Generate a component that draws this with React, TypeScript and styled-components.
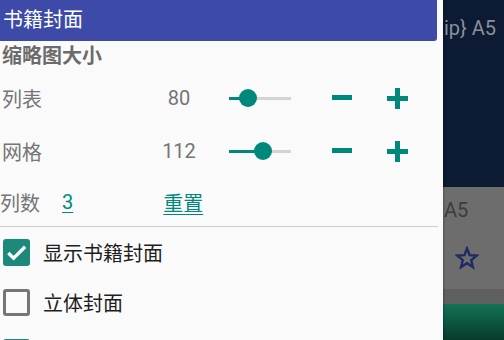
import styled, { createGlobalStyle } from "styled-components";

const teal = "#00897b";

const GlobalStyle = createGlobalStyle`
  html, body {
    margin: 0;
    padding: 0;
    background: #0c1a33;
  }
  body {
    font-family: Roboto, "Noto Sans CJK SC", sans-serif;
  }
`;

const Screen = styled.div`
  width: 504px;
  height: 340px;
  display: flex;
  overflow: hidden;
`;

const Panel = styled.div`
  width: 443px;
  flex: none;
  background: #fafafa;
  display: flex;
  flex-direction: column;
  box-shadow: 1px 0 2px rgba(0, 0, 0, 0.25);
  z-index: 1;
  & > * {
    flex: none;
  }
`;

const Header = styled.div`
  width: 437px;
  height: 41px;
  background: #3d4aa8;
  border-bottom-right-radius: 3px;
  color: #fff;
  font-size: 20px;
  line-height: 41px;
  padding-left: 3px;
  box-sizing: border-box;
`;

const SubTitle = styled.div`
  height: 31px;
  line-height: 31px;
  padding-left: 2px;
  font-size: 20px;
  font-weight: bold;
  color: #6b6b6b;
`;

const Row = styled.div<{ h: number }>`
  height: ${(p) => p.h}px;
  display: flex;
  align-items: center;
  font-size: 20px;
  color: #757575;
`;

const Label = styled.span<{ w: number; pad?: number }>`
  width: ${(p) => p.w}px;
  padding-left: ${(p) => p.pad ?? 2}px;
  box-sizing: border-box;
  flex: none;
`;

const Value = styled.span`
  width: 60px;
  text-align: center;
  flex: none;
  color: #757575;
`;

const Track = styled.div`
  position: relative;
  width: 62px;
  height: 3px;
  margin-left: 20px;
  background: #d4d4d4;
  flex: none;
`;

const Fill = styled.div`
  position: absolute;
  left: 0;
  top: 0;
  bottom: 0;
  background: ${teal};
`;

const Thumb = styled.div`
  position: absolute;
  top: 50%;
  width: 18px;
  height: 18px;
  margin: -9px 0 0 -9px;
  border-radius: 50%;
  background: ${teal};
`;

const IconButton = styled.button<{ ml: number }>`
  width: 40px;
  height: 40px;
  margin-left: ${(p) => p.ml}px;
  padding: 0;
  border: none;
  background: none;
  display: flex;
  align-items: center;
  justify-content: center;
  flex: none;
`;

const Link = styled.span<{ ml: number }>`
  margin-left: ${(p) => p.ml}px;
  color: ${teal};
  text-decoration: underline;
  text-underline-offset: 3px;
  text-decoration-thickness: 1px;
`;

const Divider = styled.div`
  height: 1px;
  width: 438px;
  background: #cfcfcf;
`;

const CheckRow = styled.div`
  height: 50px;
  display: flex;
  align-items: center;
  font-size: 20px;
  color: #1e1e1e;
`;

const Box = styled.div<{ on: boolean }>`
  width: 27px;
  height: 27px;
  margin-left: 3px;
  margin-right: 13px;
  box-sizing: border-box;
  border-radius: 3px;
  flex: none;
  display: flex;
  align-items: center;
  justify-content: center;
  background: ${(p) => (p.on ? "#1b8a7b" : "transparent")};
  border: ${(p) => (p.on ? "none" : "3px solid #757575")};
`;

const Side = styled.div`
  flex: 1;
  display: flex;
  flex-direction: column;
  overflow: hidden;
`;

const Block = styled.div<{ h: number; bg: string; fg?: string }>`
  height: ${(p) => p.h}px;
  flex: none;
  background: ${(p) => p.bg};
  color: ${(p) => p.fg ?? "#888"};
  font-size: 20px;
  white-space: nowrap;
  display: flex;
  flex-direction: column;
`;

const SideText = styled.div<{ mt: number; ml: number }>`
  margin-top: ${(p) => p.mt}px;
  margin-left: ${(p) => p.ml}px;
  line-height: 24px;
`;

const StarWrap = styled.div`
  margin: 24px 0 0 12px;
`;

const Slider = ({ pos }: { pos: number }) => (
  <Track>
    <Fill style={{ width: pos }} />
    <Thumb style={{ left: pos }} />
  </Track>
);

const Minus = () => (
  <svg width="20" height="6" viewBox="0 0 20 6">
    <rect x="0" y="0" width="20" height="5" fill={teal} />
  </svg>
);

const Plus = () => (
  <svg width="21" height="21" viewBox="0 0 21 21">
    <rect x="0" y="8" width="21" height="5" fill={teal} />
    <rect x="8" y="0" width="5" height="21" fill={teal} />
  </svg>
);

const Check = () => (
  <svg width="23" height="23" viewBox="0 0 24 24">
    <path d="M3.5 12.5l5.5 5.5L21 6" fill="none" stroke="#fff" strokeWidth="3.4" />
  </svg>
);

const Star = () => (
  <svg width="24" height="24" viewBox="0 0 24 24">
    <path
      d="M12 2.5l2.6 6.6 7 .5-5.4 4.5 1.7 6.9L12 17.2 6.1 21l1.7-6.9L2.4 9.6l7-.5z"
      fill="none"
      stroke="#1f2a66"
      strokeWidth="2.4"
      strokeLinejoin="miter"
    />
  </svg>
);

export default function App() {
  return (
    <>
      <GlobalStyle />
      <Screen>
        <Panel>
          <Header>书籍封面</Header>
          <SubTitle>缩略图大小</SubTitle>
          <Row h={52}>
            <Label w={149}>列表</Label>
            <Value>80</Value>
            <Slider pos={19} />
            <IconButton ml={31}>
              <Minus />
            </IconButton>
            <IconButton ml={15}>
              <Plus />
            </IconButton>
          </Row>
          <Row h={54}>
            <Label w={149}>网格</Label>
            <Value>112</Value>
            <Slider pos={34} />
            <IconButton ml={31}>
              <Minus />
            </IconButton>
            <IconButton ml={15}>
              <Plus />
            </IconButton>
          </Row>
          <Row h={48}>
            <Label w={41} pad={0}>列数</Label>
            <Link ml={21}>3</Link>
            <Link ml={90}>重置</Link>
          </Row>
          <Divider />
          <CheckRow>
            <Box on>
              <Check />
            </Box>
            显示书籍封面
          </CheckRow>
          <CheckRow>
            <Box on={false} />
            立体封面
          </CheckRow>
          <CheckRow>
            <Box on>
              <Check />
            </Box>
          </CheckRow>
        </Panel>
        <Side>
          <Block h={187} bg="#0c1a33" fg="#8a8f9a">
            <SideText mt={16} ml={1}>{"ip} A5"}</SideText>
          </Block>
          <Block h={102} bg="#6d6d6d" fg="#3c3c3c">
            <SideText mt={11} ml={1}>A5</SideText>
            <StarWrap>
              <Star />
            </StarWrap>
          </Block>
          <Block h={15} bg="#5f5f5f" />
          <Block h={36} bg="linear-gradient(#147257, #073a2c)" />
        </Side>
      </Screen>
    </>
  );
}
